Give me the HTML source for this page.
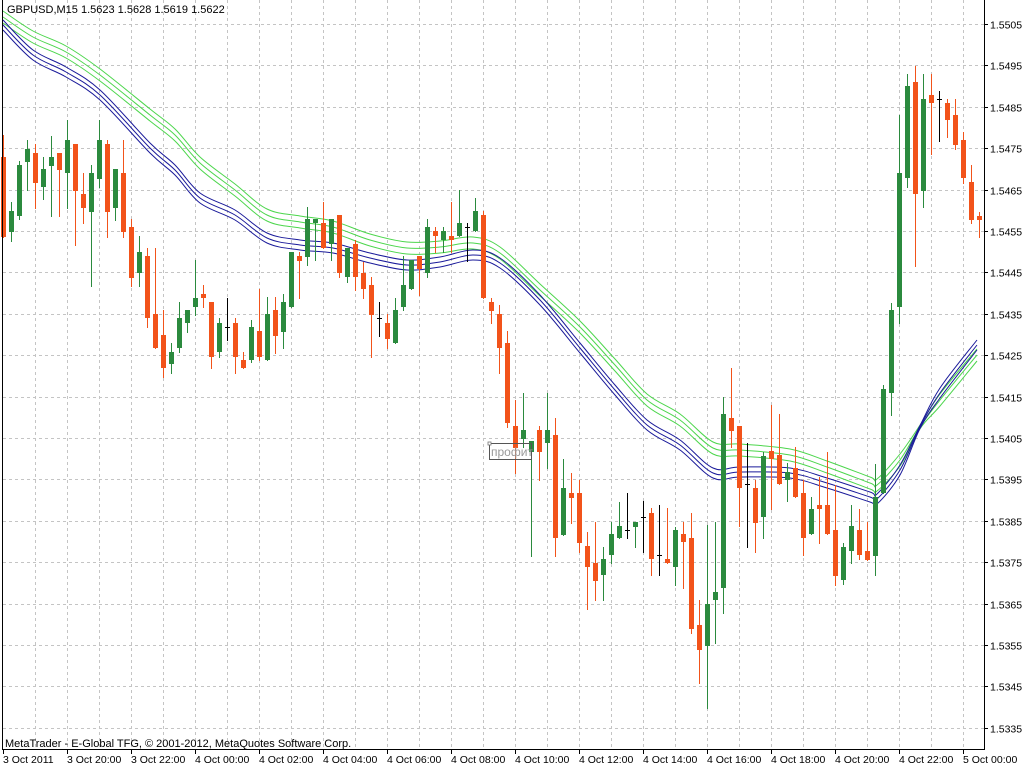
<!DOCTYPE html>
<html><head><meta charset="utf-8"><style>
html,body{margin:0;padding:0;background:#fff;width:1024px;height:768px;overflow:hidden}
svg{display:block}
text{font-family:"Liberation Sans",Arial,sans-serif;font-size:10.5px;fill:#000}
</style></head><body>
<svg id="s" width="1024" height="768" xmlns="http://www.w3.org/2000/svg">
<rect width="1024" height="768" fill="#fff"/>
<g id="grid" stroke="#c4c4c4" stroke-width="1" stroke-dasharray="3,3"></g>
<g id="ma" fill="none" stroke-width="1"></g>
<g id="c"></g>
<rect x="489.5" y="443.5" width="42" height="16" fill="none" stroke="#555"/>
<rect x="488" y="442" width="3" height="3" fill="#fff" stroke="#777" stroke-width="0.8"/>
<text x="491" y="456" style="font-size:12px;fill:#999">профит</text>
<line x1="2.5" y1="0" x2="2.5" y2="750" stroke="#000"/>
<line x1="984.5" y1="0" x2="984.5" y2="750" stroke="#000"/>
<line x1="2" y1="749.5" x2="985" y2="749.5" stroke="#000"/>
<g id="ax"></g>
<text x="7" y="13" style="font-size:11px">GBPUSD,M15  1.5623 1.5628 1.5619 1.5622</text>
<text x="5" y="747" style="font-size:11px">MetaTrader - E-Global TFG, © 2001-2012, MetaQuotes Software Corp.</text>
</svg>
<script>
var NS="http://www.w3.org/2000/svg";
function el(p,n,a,t){var e=document.createElementNS(NS,n);for(var k in a)e.setAttribute(k,a[k]);if(t)e.textContent=t;document.getElementById(p).appendChild(e);return e;}
for(var k=0;k<18;k++){var y=Math.round(24+41.4*k)+0.5;el("grid","line",{x1:3,y1:y,x2:984,y2:y});
 el("ax","line",{x1:984,y1:y,x2:988,y2:y,stroke:"#000"});
 el("ax","text",{x:990,y:y+4},(1.5505-0.001*k).toFixed(4));}
for(var x=35;x<984;x+=32){el("grid","line",{x1:x+0.5,y1:0,x2:x+0.5,y2:749});}
var labels=["3 Oct 2011","3 Oct 20:00","3 Oct 22:00","4 Oct 00:00","4 Oct 02:00","4 Oct 04:00","4 Oct 06:00","4 Oct 08:00","4 Oct 10:00","4 Oct 12:00","4 Oct 14:00","4 Oct 16:00","4 Oct 18:00","4 Oct 20:00","4 Oct 22:00","5 Oct 00:00"];
for(var i=0;i<labels.length;i++){var lx=3+64*i;el("ax","line",{x1:lx+0.5,y1:749,x2:lx+0.5,y2:754,stroke:"#000"});el("ax","text",{x:lx,y:763},labels[i]);}
var B=[[3,25],[33,55],[66,72],[100,95],[150,148],[175,170],[200,198],[235,215],[267,238],[300,245],[333,248],[370,258],[407,265],[440,262],[473,255],[500,263],[540,300],[580,348],[615,390],[647,425],[680,445],[713,473],[740,472],[790,473],[827,483],[870,497],[877,499],[900,470],[920,427],[940,393],[977,345]];
var G=[[3,17],[33,37],[66,52],[100,75],[150,115],[175,135],[200,163],[235,190],[267,215],[300,222],[333,227],[370,240],[407,248],[440,247],[473,243],[500,253],[540,290],[580,327],[615,365],[647,400],[680,420],[713,448],[740,450],[790,455],[827,467],[870,483],[877,485],[900,460],[920,427],[940,400],[977,355]];
function pl(P,o,c){var pts=P.map(function(p){var oo=o;if(p[0]==920)oo=o*0.3;return [p[0],p[1]+oo];});
 var d="M"+pts[0][0]+","+pts[0][1];
 for(var i=0;i<pts.length-1;i++){var p0=pts[Math.max(i-1,0)],p1=pts[i],p2=pts[i+1],p3=pts[Math.min(i+2,pts.length-1)];
  d+=" C"+(p1[0]+(p2[0]-p0[0])/6)+","+(p1[1]+(p2[1]-p0[1])/6)+" "+(p2[0]-(p3[0]-p1[0])/6)+","+(p2[1]-(p3[1]-p1[1])/6)+" "+p2[0]+","+p2[1];}
 el("ma","path",{d:d,stroke:c});}
[-6,0,6].forEach(function(o){pl(G,o,"#4cd64c");});
[-5,0,5].forEach(function(o){pl(B,o,"#1a1a9a");});
var D="o 157 237 135 237|g 211 232 202 241|g 165 216 161 219|g 149 162 140 190|o 153 183 144 208|g 169 187 157 199|g 157 166 136 216|o 153 170 153 216|g 140 173 120 208|o 144 191 144 245|o 194 208 173 223|g 173 212 165 286|g 140 179 120 187|o 144 212 140 237|g 169 208 169 220|o 173 232 140 237|o 227 278 219 286|g 252 273 236 286|o 256 318 248 327|o 314 348 248 348|o 335 368 310 377|g 352 364 343 373|g 318 348 302 352|g 310 323 310 332|g 298 307 260 315|o 294 298 285 307|o 302 357 302 368|g 323 352 318 357|k 327 327 298 340|o 323 357 318 373|o 360 368 352 368|g 327 360 320 362|o 331 357 289 360|g 314 360 297 360|o 310 336 297 353|g 302 332 294 348|g 252 307 252 307|o 256 261 252 298|g 219 257 207 265|g 219 223 219 260|o 223 248 202 248|g 219 244 219 260|o 215 273 215 277|g 248 277 248 282|o 244 277 240 290|o 273 289 262 298|o 285 315 277 357|k 318 318 302 336|o 323 339 314 348|g 310 343 298 343|g 285 307 256 310|g 260 289 260 289|o 256 269 256 295|g 227 273 219 277|o 231 236 227 252|g 231 240 227 252|o 236 240 202 252|g 223 236 190 236|k 227 227 223 261|g 211 231 198 231|o 215 298 211 298|o 302 311 298 323|o 314 348 305 373|o 343 423 331 427|o 426 448 400 473|g 430 439 393 447|g 441 452 441 556|o 430 452 426 480|g 430 443 393 468|o 435 538 418 556|g 488 535 459 535|o 493 498 473 523|o 493 543 480 552|o 546 567 532 609|o 563 581 522 600|g 559 575 547 600|g 534 555 522 563|g 526 538 502 538|k 530 530 493 538|g 522 527 522 547|k 517 517 501 552|o 513 559 508 575|k 555 555 505 575|o 559 563 508 563|g 530 567 527 585|o 534 542 522 588|o 538 629 513 633|o 625 650 600 683|g 604 646 525 708|g 592 600 522 643|g 414 588 397 613|o 418 431 368 447|o 426 488 426 526|k 484 484 443 547|o 488 523 480 552|g 456 517 452 538|o 451 459 405 509|o 455 484 414 484|g 472 480 463 501|o 468 497 447 497|o 493 538 480 555|g 509 534 497 534|o 505 509 477 543|o 505 534 452 534|o 530 576 485 585|g 547 580 543 584|g 526 551 505 563|o 530 555 509 559|o 551 560 522 560|g 497 556 464 575|g 389 493 385 493|g 310 393 303 415|g 173 307 115 323|g 86 178 74 187|o 82 194 66 266|g 99 191 74 207|o 95 103 74 154|k 99 99 91 141|o 103 120 99 137|o 115 145 99 149|o 140 178 132 183|o 182 220 165 223|o 216 220 212 237";
var col={o:"#f2531a",g:"#2b8a3e",k:"#000"};
D.split("|").forEach(function(r,i){var a=r.split(" ");var c=col[a[0]];var bt=+a[1],bb=+a[2],wt=+a[3],wb=+a[4];var x=3+8*i;
 el("c","line",{x1:x+0.5,y1:wt,x2:x+0.5,y2:wb+1,stroke:c});
 if(a[0]=="k"){el("c","line",{x1:x-2,y1:bt+0.5,x2:x+3,y2:bt+0.5,stroke:c});}
 else{el("c","rect",{x:x-2,y:bt,width:5,height:Math.max(bb-bt,3),fill:c});}
});
</script>
</body></html>
